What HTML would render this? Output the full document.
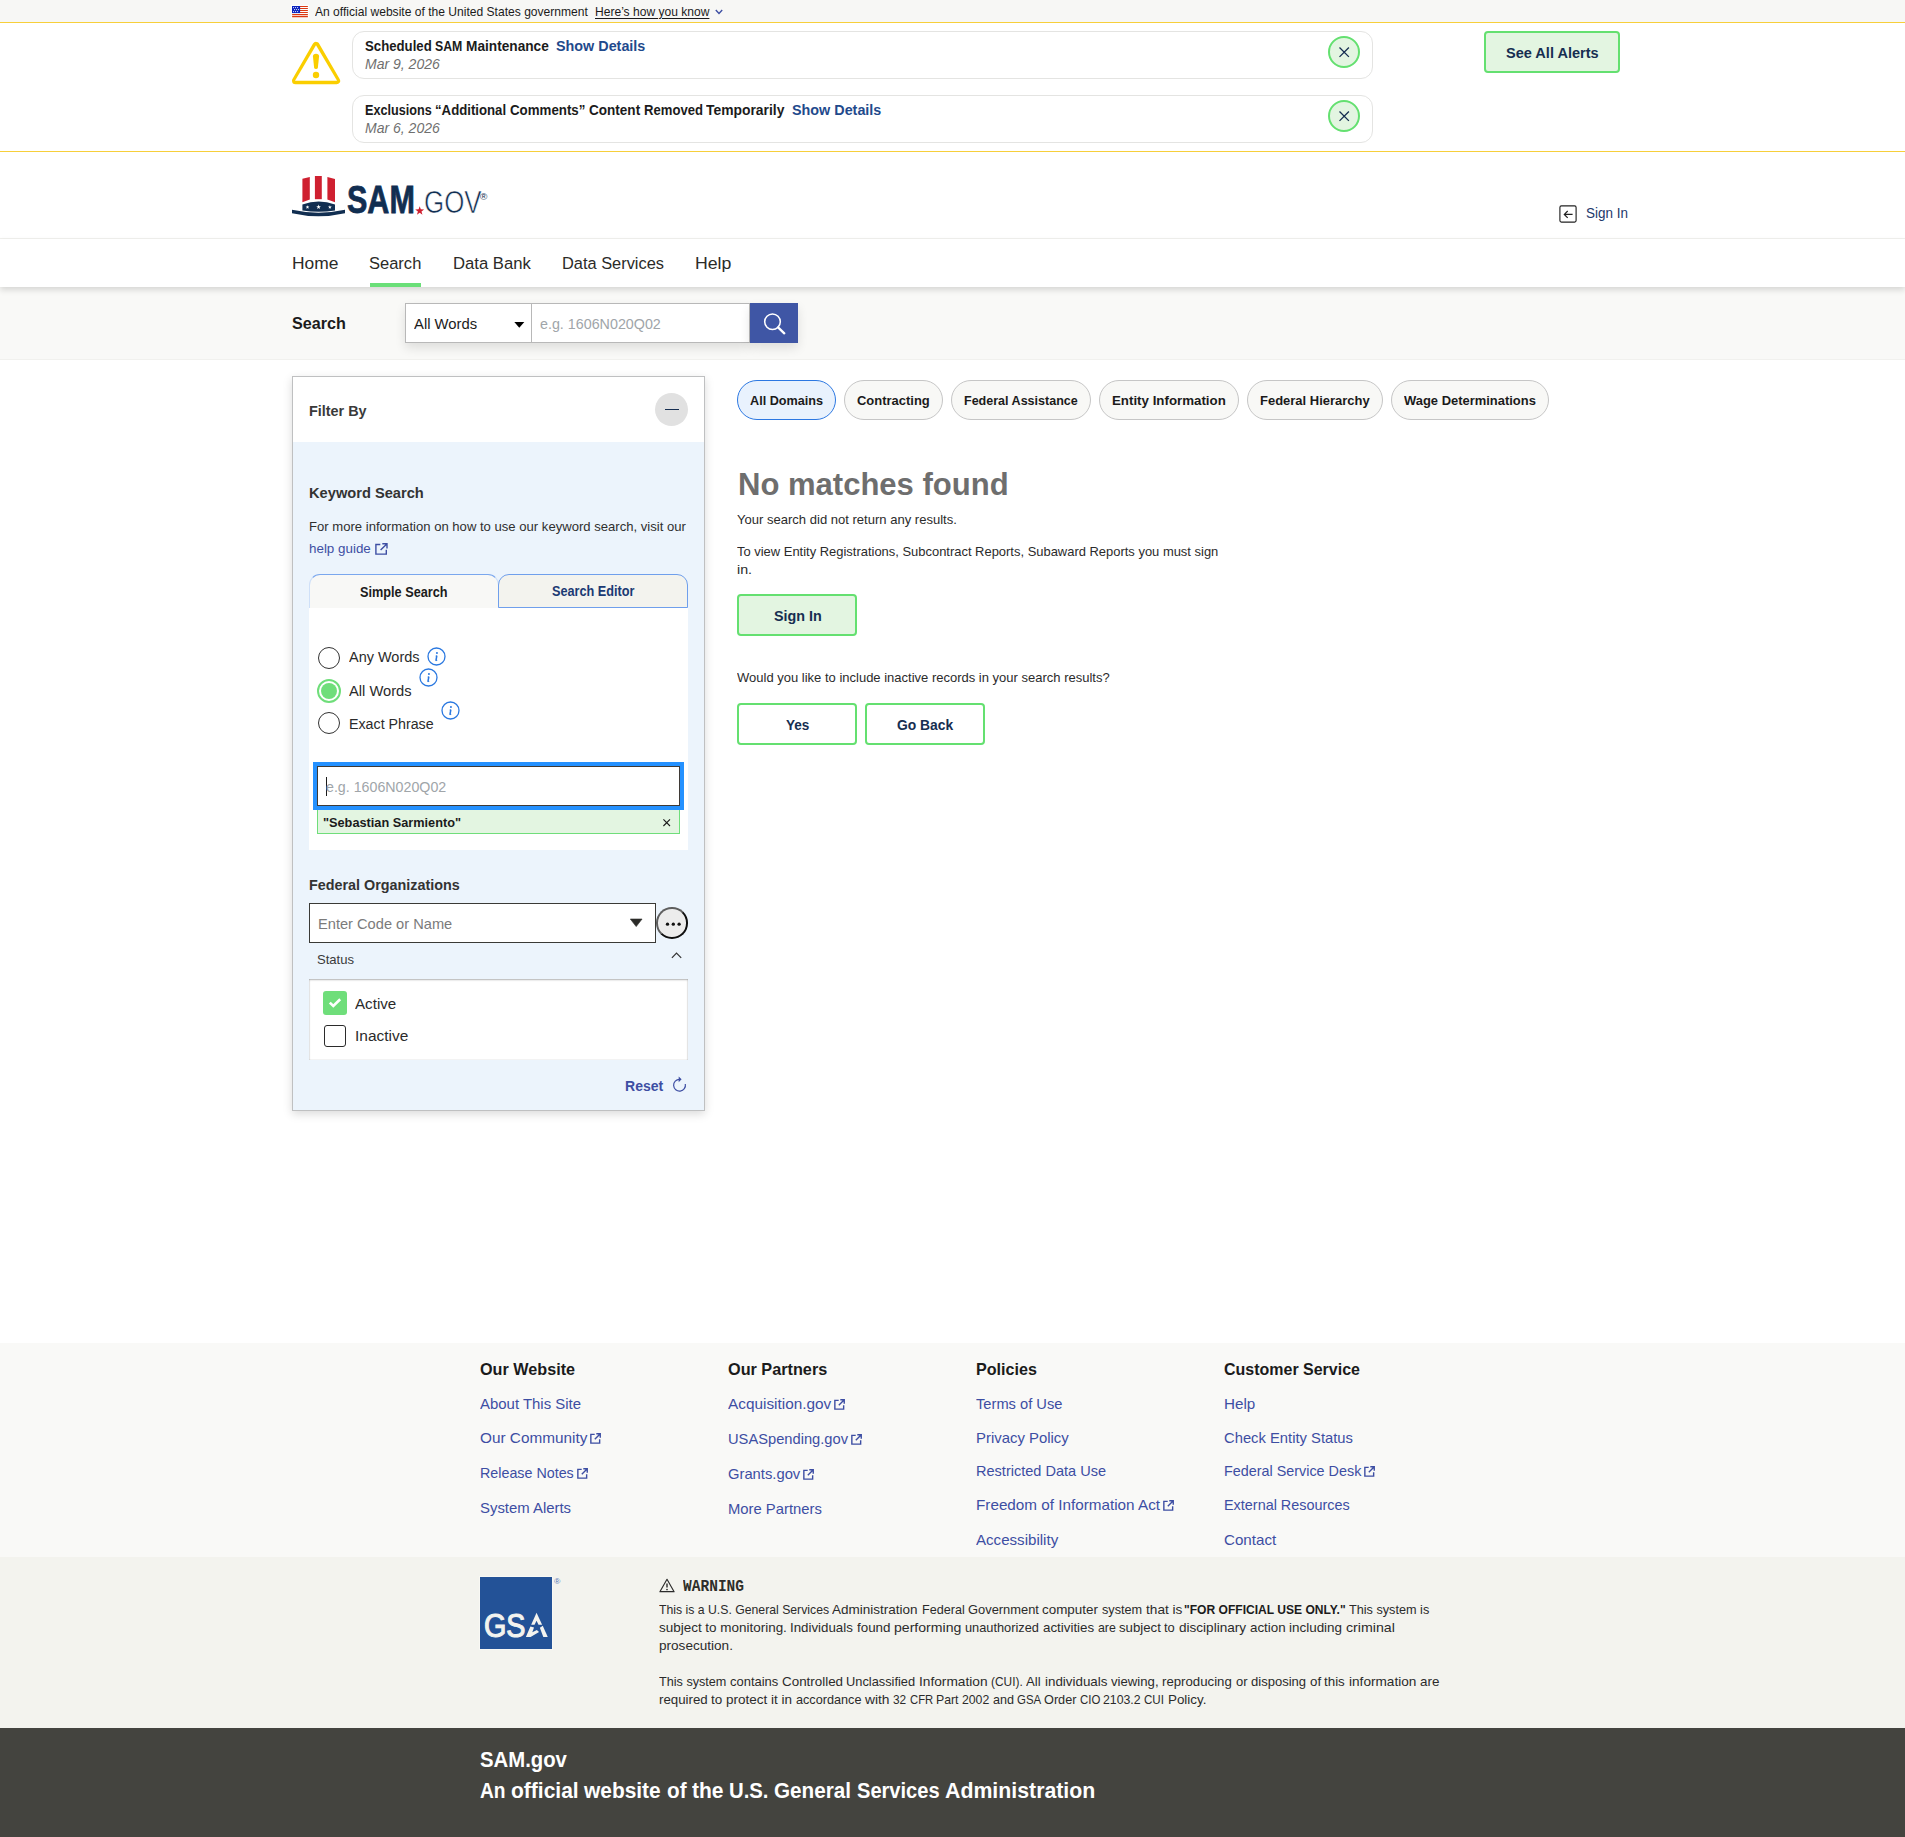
<!DOCTYPE html>
<html lang="en"><head><meta charset="utf-8"><title>SAM.gov | Search</title>
<style>
html,body{margin:0;padding:0;}
body{width:1905px;height:1837px;position:relative;overflow:hidden;background:#fff;
font-family:"Liberation Sans",sans-serif;}
.b{position:absolute;box-sizing:border-box;}
.t{position:absolute;white-space:pre;transform-origin:0 50%;}
svg{position:absolute;overflow:visible;}
</style></head>
<body>
<header>
<div class="b" style="left:0px;top:0px;width:1905px;height:22px;background:#f7f7f5;"></div>
<svg style="left:291px;top:5px" width="18" height="13" viewBox="-1 -1 18 13">
<rect x="-1" y="-1" width="18" height="13.2" fill="#fdfefd"/>
<g fill="#dc3912"><rect x="0" y="0.0" width="16" height="1.1" rx="0.5"/><rect x="0" y="2.0" width="16" height="1.1" rx="0.5"/><rect x="0" y="4.0" width="16" height="1.1" rx="0.5"/><rect x="0" y="6.0" width="16" height="1.1" rx="0.5"/><rect x="0" y="8.05" width="16" height="1.1" rx="0.5"/><rect x="0" y="10.05" width="16" height="1.1" rx="0.5"/></g>
<rect width="8.1" height="7.1" fill="#0a22be"/><g fill="#fff"><circle cx="1.6" cy="1.6" r="0.55"/><circle cx="3.6" cy="1.6" r="0.55"/><circle cx="5.6" cy="1.6" r="0.55"/><circle cx="2.6" cy="3.6" r="0.55"/><circle cx="4.6" cy="3.6" r="0.55"/><circle cx="6.6" cy="3.6" r="0.55"/><circle cx="1.6" cy="5.6" r="0.55"/><circle cx="3.6" cy="5.6" r="0.55"/><circle cx="5.6" cy="5.6" r="0.55"/></g></svg>
<span class="t" style="left:315.30px;top:5.55px;font-size:12.7px;line-height:12.7px;color:#1b1b1b;transform:scaleX(0.9515);">An official website of the United States government</span>
<span class="t" style="left:595.30px;top:5.55px;font-size:12.7px;line-height:12.7px;color:#1b1b1b;transform:scaleX(0.9505);text-decoration:underline;text-underline-offset:2px;">Here’s how you know</span>
<svg style="left:715px;top:9px" width="8" height="6" viewBox="0 0 8 6"><path d="M0.8 1 L4 4.4 L7.2 1" fill="none" stroke="#3d4ea3" stroke-width="1.4"/></svg>
<div class="b" style="left:0px;top:22px;width:1905px;height:1px;background:#f7cf3a;"></div>
<div class="b" style="left:0px;top:151px;width:1905px;height:1px;background:#f7cf3a;"></div>
<svg style="left:286px;top:36px" width="60" height="54" viewBox="286 36 60 54">
<path d="M316.05 45.3 L336.6 80.7 L295.5 80.7 Z" fill="#face00" stroke="#face00" stroke-width="7" stroke-linejoin="round"/>
<path d="M316.0 45.2 L337.1 80.7 L295.0 80.7 Z" fill="#fff"/>
<path d="M312.95 56.6 Q312.95 53.8 316 53.8 Q319.05 53.8 319.05 56.6 L317.9 67.4 Q317.7 69.1 316 69.1 Q314.3 69.1 314.1 67.4 Z" fill="#face00"/>
<circle cx="316" cy="74.95" r="3.2" fill="#face00"/></svg>
<div class="b" style="left:352px;top:31px;width:1021px;height:48px;background:#fff;border:1px solid #e4e4e2;border-radius:12px;"></div>
<span class="t" style="left:364.69px;top:39.37px;font-size:14.8px;line-height:14.8px;color:#1b1b1b;font-weight:700;transform:scaleX(0.8918);">Scheduled </span>
<span class="t" style="left:435.09px;top:39.37px;font-size:14.8px;line-height:14.8px;color:#1b1b1b;font-weight:700;transform:scaleX(0.8324);">SAM </span>
<span class="t" style="left:465.89px;top:39.37px;font-size:14.8px;line-height:14.8px;color:#1b1b1b;font-weight:700;transform:scaleX(0.9240);">Maintenance</span>
<span class="t" style="left:555.79px;top:39.37px;font-size:14.8px;line-height:14.8px;color:#1f4a8c;font-weight:700;transform:scaleX(0.9700);">Show Details</span>
<span class="t" style="left:364.70px;top:56.74px;font-size:14.6px;line-height:14.6px;color:#6f6f6f;font-style:italic;transform:scaleX(0.9604);">Mar 9, 2026</span>
<div class="b" style="left:1328px;top:36px;width:32px;height:32px;background:#e3f5e1;border:2px solid #64e070;border-radius:50%;"></div>
<svg style="left:1339.0px;top:46.8px" width="10.4" height="10.4" viewBox="0 0 10.4 10.4"><path d="M0.5 0.5 L9.9 9.9 M9.9 0.5 L0.5 9.9" stroke="#162e51" stroke-width="1.3" fill="none"/></svg>
<div class="b" style="left:352px;top:95px;width:1021px;height:48px;background:#fff;border:1px solid #e4e4e2;border-radius:12px;"></div>
<span class="t" style="left:364.69px;top:103.37px;font-size:14.8px;line-height:14.8px;color:#1b1b1b;font-weight:700;transform:scaleX(0.8535);">Exclusions </span>
<span class="t" style="left:434.89px;top:103.37px;font-size:14.8px;line-height:14.8px;color:#1b1b1b;font-weight:700;transform:scaleX(0.8921);">“Additional </span>
<span class="t" style="left:509.69px;top:103.37px;font-size:14.8px;line-height:14.8px;color:#1b1b1b;font-weight:700;transform:scaleX(0.8990);">Comments” </span>
<span class="t" style="left:588.79px;top:103.37px;font-size:14.8px;line-height:14.8px;color:#1b1b1b;font-weight:700;transform:scaleX(0.9150);">Content </span>
<span class="t" style="left:643.69px;top:103.37px;font-size:14.8px;line-height:14.8px;color:#1b1b1b;font-weight:700;transform:scaleX(0.8852);">Removed </span>
<span class="t" style="left:706.29px;top:103.37px;font-size:14.8px;line-height:14.8px;color:#1b1b1b;font-weight:700;transform:scaleX(0.9380);">Temporarily</span>
<span class="t" style="left:791.99px;top:103.37px;font-size:14.8px;line-height:14.8px;color:#1f4a8c;font-weight:700;transform:scaleX(0.9700);">Show Details</span>
<span class="t" style="left:364.70px;top:120.74px;font-size:14.6px;line-height:14.6px;color:#6f6f6f;font-style:italic;transform:scaleX(0.9604);">Mar 6, 2026</span>
<div class="b" style="left:1328px;top:100px;width:32px;height:32px;background:#e3f5e1;border:2px solid #64e070;border-radius:50%;"></div>
<svg style="left:1339.0px;top:110.8px" width="10.4" height="10.4" viewBox="0 0 10.4 10.4"><path d="M0.5 0.5 L9.9 9.9 M9.9 0.5 L0.5 9.9" stroke="#162e51" stroke-width="1.3" fill="none"/></svg>
<div class="b" style="left:1484px;top:31px;width:136px;height:42px;background:#e3f5e1;border:2px solid #64e070;border-radius:4px;"></div>
<span class="t" style="left:1505.98px;top:46.49px;font-size:14.9px;line-height:14.9px;color:#162e51;font-weight:700;transform:scaleX(0.9761);">See All Alerts</span>
<svg style="left:0;top:0" width="1905" height="240" viewBox="0 0 1905 240">
<g fill="#cf2030">
<path d="M302.4 178.7 L309.8 177 L309.8 199.6 L302.4 202.2 Z"/>
<path d="M314.9 176 L321.8 176 L321.8 199.2 L314.9 199.2 Z"/>
<path d="M327.4 177 L335 178.9 L335 202.2 L327.4 199.6 Z"/>
</g>
<path d="M302.4 210.6 L302.4 204.4 Q318.7 198.6 335 204.4 L335 210.6 Q318.7 213 302.4 210.6 Z" fill="#112e51"/>
<path d="M292 209.8 Q318.5 215.6 345 209.8 L345 213.2 Q318.5 219.2 292 213.2 Z" fill="#112e51"/>
<g fill="#fff">
<path d="M0 -2 L0.47 -0.65 L1.9 -0.62 L0.76 0.25 L1.18 1.62 L0 0.8 L-1.18 1.62 L-0.76 0.25 L-1.9 -0.62 L-0.47 -0.65 Z" transform="translate(307.5 207.2)"/>
<path d="M0 -2 L0.47 -0.65 L1.9 -0.62 L0.76 0.25 L1.18 1.62 L0 0.8 L-1.18 1.62 L-0.76 0.25 L-1.9 -0.62 L-0.47 -0.65 Z" transform="translate(318.6 207.0) scale(1.25)"/>
<path d="M0 -2 L0.47 -0.65 L1.9 -0.62 L0.76 0.25 L1.18 1.62 L0 0.8 L-1.18 1.62 L-0.76 0.25 L-1.9 -0.62 L-0.47 -0.65 Z" transform="translate(329.9 207.2)"/>
</g>
<path d="M0 -2 L0.47 -0.65 L1.9 -0.62 L0.76 0.25 L1.18 1.62 L0 0.8 L-1.18 1.62 L-0.76 0.25 L-1.9 -0.62 L-0.47 -0.65 Z" transform="translate(419.7 210.9) scale(2.35)" fill="#cf2030"/>
</svg>
<span class="t" style="left:346.78px;top:181.01px;font-size:38.5px;line-height:38.5px;color:#112e51;font-weight:700;transform:scaleX(0.7928);-webkit-text-stroke:0.8px #112e51;">SAM</span>
<span class="t" style="left:424.30px;top:188.04px;font-size:30.9px;line-height:30.9px;color:#112e51;transform:scaleX(0.8388);-webkit-text-stroke:0.65px #fff;">GOV</span>
<span class="t" style="left:480.13px;top:192.90px;font-size:8.5px;line-height:8.5px;color:#112e51;transform:scaleX(1.1707);">®</span>
<svg style="left:1559.1px;top:205.1px" width="18" height="18" viewBox="0 0 18 18">
<rect x="0.9" y="0.9" width="16.2" height="16.2" rx="1.5" fill="none" stroke="#222" stroke-width="1.15"/>
<path d="M13.6 9.4 H5.4 M8.7 6 L5.3 9.4 L8.7 12.8" fill="none" stroke="#222" stroke-width="1.2"/></svg>
<span class="t" style="left:1585.51px;top:206.30px;font-size:14.3px;line-height:14.3px;color:#22386b;transform:scaleX(0.9406);">Sign In</span>
<div class="b" style="left:0px;top:238px;width:1905px;height:1px;background:#f1f1ee;"></div>
<div class="b" style="left:0px;top:287px;width:1905px;height:73px;background:#f9f9f7;border-bottom:1px solid #f1f1ee;"></div>
<div class="b" style="left:0px;top:239px;width:1905px;height:48px;background:#fff;box-shadow:0 3px 6px rgba(0,0,0,.14);"></div>
<span class="t" style="left:291.54px;top:255.17px;font-size:17.4px;line-height:17.4px;color:#2b2b28;transform:scaleX(1.0005);">Home</span>
<span class="t" style="left:369.04px;top:255.17px;font-size:17.4px;line-height:17.4px;color:#2b2b28;transform:scaleX(0.9493);">Search</span>
<span class="t" style="left:452.94px;top:255.17px;font-size:17.4px;line-height:17.4px;color:#2b2b28;transform:scaleX(0.9593);">Data Bank</span>
<span class="t" style="left:561.94px;top:255.17px;font-size:17.4px;line-height:17.4px;color:#2b2b28;transform:scaleX(0.9424);">Data Services</span>
<span class="t" style="left:694.84px;top:255.17px;font-size:17.4px;line-height:17.4px;color:#2b2b28;transform:scaleX(1.0177);">Help</span>
<div class="b" style="left:370px;top:283px;width:51px;height:4px;background:#6adf78;"></div>
<span class="t" style="left:291.54px;top:315.17px;font-size:17.4px;line-height:17.4px;color:#1b1b1b;font-weight:700;transform:scaleX(0.9293);">Search</span>
<div class="b" style="left:405px;top:303px;width:345px;height:40px;background:#fff;border:1px solid #b8b8b8;box-shadow:0 5px 10px rgba(0,0,0,.11);"></div>
<div class="b" style="left:531px;top:304px;width:1px;height:38px;background:#b8b8b8;"></div>
<span class="t" style="left:413.59px;top:317.37px;font-size:14.8px;line-height:14.8px;color:#1b1b1b;transform:scaleX(1.0013);">All Words</span>
<svg style="left:513.6px;top:321.6px" width="10.6" height="5.8" viewBox="0 0 10.6 5.8"><path d="M0.3 0 H10.3 L5.3 5.8 Z" fill="#000"/></svg>
<span class="t" style="left:539.59px;top:317.37px;font-size:14.8px;line-height:14.8px;color:#a0a5a9;transform:scaleX(0.9661);">e.g. 1606N020Q02</span>
<div class="b" style="left:750px;top:303px;width:48px;height:40px;background:#3f56a5;box-shadow:0 5px 10px rgba(0,0,0,.11);"></div>
<svg style="left:762px;top:311px" width="24" height="24" viewBox="0 0 24 24"><circle cx="10.5" cy="10.7" r="7.8" fill="none" stroke="#fff" stroke-width="1.55"/><path d="M16.1 16.4 L22.3 22.3" stroke="#fff" stroke-width="2.3" stroke-linecap="round"/></svg>
</header>
<aside>
<div class="b" style="left:292px;top:376px;width:413px;height:735px;background:#ecf4fc;border:1px solid #bfc0c1;box-shadow:0 3px 9px rgba(0,0,0,.15);"></div>
<div class="b" style="left:293px;top:377px;width:411px;height:65px;background:#fff;"></div>
<span class="t" style="left:308.69px;top:403.67px;font-size:14.8px;line-height:14.8px;color:#3a3a3a;font-weight:700;transform:scaleX(0.9734);">Filter By</span>
<div class="b" style="left:655px;top:393px;width:33px;height:33px;background:#e1e1e1;border-radius:50%;"></div>
<div class="b" style="left:664.8px;top:408.6px;width:14.2px;height:1.4px;background:#162e51;"></div>
<span class="t" style="left:308.69px;top:486.37px;font-size:14.8px;line-height:14.8px;color:#333;font-weight:700;transform:scaleX(0.9902);">Keyword Search</span>
<span class="t" style="left:308.76px;top:520.07px;font-size:13.5px;line-height:13.5px;color:#2f2f2f;transform:scaleX(0.9697);">For more information on how to use our keyword search, visit our</span>
<span class="t" style="left:308.76px;top:541.67px;font-size:13.5px;line-height:13.5px;color:#3d4ea3;transform:scaleX(0.9915);">help guide</span>
<svg style="left:375px;top:543px" width="13" height="12" viewBox="0 0 13 12"><path d="M5.3 1.5 H0.9 V11.1 H11.3 V6.8" fill="none" stroke="#3d4ea3" stroke-width="1.4"/><path d="M7.3 0.8 H12 V5.4 M11.8 1.0 L5.6 7.1" fill="none" stroke="#3d4ea3" stroke-width="1.4"/></svg>
<div class="b" style="left:309px;top:573.8px;width:189.5px;height:34.5px;background:#f8f8f6;border-radius:11px 11px 0 0;border-top:1px solid #7aa7ee;border-left:1px solid #cfe0f8;border-right:1px solid #cfe0f8;"></div>
<div class="b" style="left:497.8px;top:573.8px;width:190.4px;height:34px;background:#f3f3ee;border:1px solid #6f9fec;border-radius:11px 11px 0 0;"></div>
<span class="t" style="left:360.24px;top:585.53px;font-size:13.9px;line-height:13.9px;color:#1b1b1b;font-weight:700;transform:scaleX(0.9141);">Simple Search</span>
<span class="t" style="left:551.64px;top:584.73px;font-size:13.9px;line-height:13.9px;color:#1b3a73;font-weight:700;transform:scaleX(0.9137);">Search Editor</span>
<div class="b" style="left:309px;top:608px;width:379.2px;height:242px;background:#fff;"></div>
<div class="b" style="left:318px;top:647px;width:22px;height:22px;background:#fff;border:1.6px solid #333;border-radius:50%;"></div>
<span class="t" style="left:348.98px;top:650.49px;font-size:14.9px;line-height:14.9px;color:#2b2b2b;transform:scaleX(0.9721);">Any Words</span>
<svg style="left:426.7px;top:646.7px" width="19" height="19" viewBox="0 0 19 19"><circle cx="9.5" cy="9.5" r="8.5" fill="#fff" stroke="#2a78e0" stroke-width="1.3"/><circle cx="9.95" cy="6.0" r="1.0" fill="#2a78e0"/><path d="M9.8 8.6 L8.95 13.8" stroke="#2a78e0" stroke-width="1.55"/><path d="M8.6 9.0 L9.9 8.7 M8.9 13.7 L10.3 13.4" stroke="#2a78e0" stroke-width="0.8"/></svg>
<div class="b" style="left:317px;top:679px;width:24px;height:24px;background:#fff;border:2px solid #6fde7a;border-radius:50%;"></div>
<div class="b" style="left:321px;top:683px;width:16px;height:16px;background:#6fde7a;border-radius:50%;"></div>
<span class="t" style="left:348.98px;top:684.29px;font-size:14.9px;line-height:14.9px;color:#2b2b2b;transform:scaleX(0.9872);">All Words</span>
<svg style="left:418.8px;top:667.6px" width="19" height="19" viewBox="0 0 19 19"><circle cx="9.5" cy="9.5" r="8.5" fill="#fff" stroke="#2a78e0" stroke-width="1.3"/><circle cx="9.95" cy="6.0" r="1.0" fill="#2a78e0"/><path d="M9.8 8.6 L8.95 13.8" stroke="#2a78e0" stroke-width="1.55"/><path d="M8.6 9.0 L9.9 8.7 M8.9 13.7 L10.3 13.4" stroke="#2a78e0" stroke-width="0.8"/></svg>
<div class="b" style="left:318px;top:712px;width:22px;height:22px;background:#fff;border:1.6px solid #333;border-radius:50%;"></div>
<span class="t" style="left:348.98px;top:716.79px;font-size:14.9px;line-height:14.9px;color:#2b2b2b;transform:scaleX(0.9557);">Exact Phrase</span>
<svg style="left:440.7px;top:700.7px" width="19" height="19" viewBox="0 0 19 19"><circle cx="9.5" cy="9.5" r="8.5" fill="#fff" stroke="#2a78e0" stroke-width="1.3"/><circle cx="9.95" cy="6.0" r="1.0" fill="#2a78e0"/><path d="M9.8 8.6 L8.95 13.8" stroke="#2a78e0" stroke-width="1.55"/><path d="M8.6 9.0 L9.9 8.7 M8.9 13.7 L10.3 13.4" stroke="#2a78e0" stroke-width="0.8"/></svg>
<div class="b" style="left:313px;top:762px;width:371px;height:48px;background:#2491ff;"></div>
<div class="b" style="left:317px;top:766px;width:363px;height:40px;background:#fff;border:1px solid #3f3a36;"></div>
<div class="b" style="left:326px;top:776.5px;width:1px;height:19.5px;background:#1b1b1b;"></div>
<span class="t" style="left:325.79px;top:780.37px;font-size:14.8px;line-height:14.8px;color:#a0a5a9;transform:scaleX(0.9613);">e.g. 1606N020Q02</span>
<div class="b" style="left:317px;top:810px;width:363px;height:24px;background:#e3f5e1;border:1px solid #6fde7a;border-top:none;"></div>
<span class="t" style="left:322.75px;top:816.39px;font-size:13.6px;line-height:13.6px;color:#1b1b1b;font-weight:700;transform:scaleX(0.9364);">"Sebastian Sarmiento"</span>
<svg style="left:663.2px;top:819.4px" width="7.4" height="7.4" viewBox="0 0 7.4 7.4"><path d="M0.4 0.4 L7 7 M7 0.4 L0.4 7" stroke="#1b1b1b" stroke-width="1.1"/></svg>
<span class="t" style="left:308.69px;top:877.67px;font-size:14.8px;line-height:14.8px;color:#333;font-weight:700;transform:scaleX(0.9705);">Federal Organizations</span>
<div class="b" style="left:309px;top:903px;width:347px;height:40px;background:#fff;border:1px solid #3a3a36;"></div>
<span class="t" style="left:317.98px;top:916.10px;font-size:15px;line-height:15px;color:#7b7b7b;transform:scaleX(0.9758);">Enter Code or Name</span>
<svg style="left:630px;top:919.2px" width="12.4" height="7.8" viewBox="0 0 12.4 7.8"><path d="M0.3 0 H12.1 L6.2 7.6 Z" fill="#2b2b28" stroke="#2b2b28" stroke-width="0.6" stroke-linejoin="round"/></svg>
<div class="b" style="left:656.4px;top:907px;width:31.7px;height:31.7px;background:#ececec;border-radius:50%;border:2px solid #0e0e0e;border-top-color:#5e5e5e;border-left-color:#5e5e5e;"></div>
<svg style="left:660px;top:918px" width="24" height="12" viewBox="660 918 24 12"><g fill="#111"><circle cx="667.5" cy="924.2" r="1.65"/><circle cx="673.3" cy="924.2" r="1.65"/><circle cx="679.1" cy="924.2" r="1.65"/></g></svg>
<span class="t" style="left:316.66px;top:952.96px;font-size:13.4px;line-height:13.4px;color:#3a3a3a;transform:scaleX(0.9764);">Status</span>
<svg style="left:670px;top:950px" width="13" height="10" viewBox="670 950 13 10"><path d="M671.9 957.9 L676.5 953.0 L681.2 957.9" fill="none" stroke="#333" stroke-width="1.2"/></svg>
<div class="b" style="left:309px;top:979px;width:379px;height:81px;background:#fff;box-shadow:inset 0 1px 2px rgba(0,0,0,.28),inset 0 0 1px rgba(0,0,0,.35);"></div>
<div class="b" style="left:323px;top:991px;width:24px;height:24px;background:#6fde7a;border-radius:3px;"></div>
<svg style="left:328px;top:997px" width="14" height="12" viewBox="0 0 14 12"><path d="M1.8 5.6 L5.3 9 L12.2 2.2" fill="none" stroke="#fff" stroke-width="2.6"/></svg>
<span class="t" style="left:355.36px;top:996.23px;font-size:15.2px;line-height:15.2px;color:#2b2b2b;transform:scaleX(0.9979);">Active</span>
<div class="b" style="left:324px;top:1025px;width:22px;height:22px;background:#fff;border:1.6px solid #2b2b2b;border-radius:3px;"></div>
<span class="t" style="left:355.36px;top:1027.63px;font-size:15.2px;line-height:15.2px;color:#2b2b2b;transform:scaleX(1.0177);">Inactive</span>
<span class="t" style="left:624.50px;top:1078.73px;font-size:14.5px;line-height:14.5px;color:#3d4ea3;font-weight:700;transform:scaleX(0.9670);">Reset</span>
<svg style="left:671.8px;top:1075.9px" width="15" height="16" viewBox="0 0 15 16"><path d="M7.6 3.3 A5.9 5.9 0 1 0 13.3 8" fill="none" stroke="#3d4ea3" stroke-width="1.2"/><path d="M6.7 0.4 L9.6 3.3 L6.7 6.2 Z" fill="#3d4ea3"/></svg>
</aside>
<main>
<div class="b" style="left:737.2px;top:380px;width:98.79999999999995px;height:40px;background:#e9f2fd;border:1px solid #2c78e2;border-radius:20px;"></div>
<span class="t" style="left:749.96px;top:393.56px;font-size:13.4px;line-height:13.4px;color:#1b1b1b;font-weight:700;transform:scaleX(0.9442);">All Domains</span>
<div class="b" style="left:844.1px;top:380px;width:98.5px;height:40px;background:#f8f8f6;border:1px solid #c6c6c6;border-radius:20px;"></div>
<span class="t" style="left:856.86px;top:393.56px;font-size:13.4px;line-height:13.4px;color:#1b1b1b;font-weight:700;transform:scaleX(0.9685);">Contracting</span>
<div class="b" style="left:951.1px;top:380px;width:139.4999999999999px;height:40px;background:#f8f8f6;border:1px solid #c6c6c6;border-radius:20px;"></div>
<span class="t" style="left:963.86px;top:393.56px;font-size:13.4px;line-height:13.4px;color:#1b1b1b;font-weight:700;transform:scaleX(0.9358);">Federal Assistance</span>
<div class="b" style="left:1099.2px;top:380px;width:139.5px;height:40px;background:#f8f8f6;border:1px solid #c6c6c6;border-radius:20px;"></div>
<span class="t" style="left:1111.96px;top:393.56px;font-size:13.4px;line-height:13.4px;color:#1b1b1b;font-weight:700;transform:scaleX(0.9931);">Entity Information</span>
<div class="b" style="left:1247.3px;top:380px;width:135.4000000000001px;height:40px;background:#f8f8f6;border:1px solid #c6c6c6;border-radius:20px;"></div>
<span class="t" style="left:1260.06px;top:393.56px;font-size:13.4px;line-height:13.4px;color:#1b1b1b;font-weight:700;transform:scaleX(0.9694);">Federal Hierarchy</span>
<div class="b" style="left:1391.3px;top:380px;width:157.60000000000014px;height:40px;background:#f8f8f6;border:1px solid #c6c6c6;border-radius:20px;"></div>
<span class="t" style="left:1404.06px;top:393.56px;font-size:13.4px;line-height:13.4px;color:#1b1b1b;font-weight:700;transform:scaleX(0.9667);">Wage Determinations</span>
<span class="t" style="left:737.88px;top:469.09px;font-size:31.2px;line-height:31.2px;color:#6e6e6e;font-weight:700;transform:scaleX(0.9948);">No matches found</span>
<span class="t" style="left:736.66px;top:513.16px;font-size:13.4px;line-height:13.4px;color:#2b2b2b;transform:scaleX(0.9738);">Your search did not return any results.</span>
<span class="t" style="left:736.66px;top:544.66px;font-size:13.4px;line-height:13.4px;color:#2b2b2b;transform:scaleX(0.9666);">To view Entity Registrations, Subcontract Reports, Subaward Reports you must sign</span>
<span class="t" style="left:736.66px;top:563.16px;font-size:13.4px;line-height:13.4px;color:#2b2b2b;transform:scaleX(1.0648);">in.</span>
<div class="b" style="left:737px;top:594px;width:120px;height:42px;background:#e3f5e1;border:2px solid #64e070;border-radius:4px;"></div>
<span class="t" style="left:773.50px;top:608.94px;font-size:14.6px;line-height:14.6px;color:#162e51;font-weight:700;transform:scaleX(0.9825);">Sign In</span>
<span class="t" style="left:736.66px;top:670.86px;font-size:13.4px;line-height:13.4px;color:#2b2b2b;transform:scaleX(0.9710);">Would you like to include inactive records in your search results?</span>
<div class="b" style="left:737px;top:703px;width:120px;height:42px;background:#fff;border:2px solid #64e070;border-radius:4px;"></div>
<span class="t" style="left:785.80px;top:717.74px;font-size:14.6px;line-height:14.6px;color:#162e51;font-weight:700;transform:scaleX(0.9298);">Yes</span>
<div class="b" style="left:865px;top:703px;width:120px;height:42px;background:#fff;border:2px solid #64e070;border-radius:4px;"></div>
<span class="t" style="left:897.40px;top:717.74px;font-size:14.6px;line-height:14.6px;color:#162e51;font-weight:700;transform:scaleX(0.9491);">Go Back</span>
</main>
<footer>
<div class="b" style="left:0px;top:1343px;width:1905px;height:214px;background:#f9f9f7;"></div>
<span class="t" style="left:480.08px;top:1361.86px;font-size:16.7px;line-height:16.7px;color:#1b1b1b;font-weight:700;transform:scaleX(0.9699);">Our Website</span>
<span class="t" style="left:728.28px;top:1361.86px;font-size:16.7px;line-height:16.7px;color:#1b1b1b;font-weight:700;transform:scaleX(0.9728);">Our Partners</span>
<span class="t" style="left:976.08px;top:1361.86px;font-size:16.7px;line-height:16.7px;color:#1b1b1b;font-weight:700;transform:scaleX(0.9645);">Policies</span>
<span class="t" style="left:1224.38px;top:1361.86px;font-size:16.7px;line-height:16.7px;color:#1b1b1b;font-weight:700;transform:scaleX(0.9578);">Customer Service</span>
<span class="t" style="left:480.19px;top:1397.07px;font-size:14.8px;line-height:14.8px;color:#3d4ea3;transform:scaleX(1.0095);">About This Site</span>
<span class="t" style="left:480.19px;top:1431.27px;font-size:14.8px;line-height:14.8px;color:#3d4ea3;transform:scaleX(1.0359);">Our Community</span>
<svg style="left:590.1px;top:1433.3000000000002px" width="11" height="11" viewBox="0 0 11 11"><path d="M4.7 1.35 H0.85 V10.15 H9.65 V6.3" fill="none" stroke="#3d4ea3" stroke-width="1.4"/><path d="M6.3 0.75 H10.25 V4.7 M10.0 1.0 L4.8 6.2" fill="none" stroke="#3d4ea3" stroke-width="1.4"/></svg>
<span class="t" style="left:480.19px;top:1465.87px;font-size:14.8px;line-height:14.8px;color:#3d4ea3;transform:scaleX(0.9656);">Release Notes</span>
<svg style="left:576.5px;top:1467.9px" width="11" height="11" viewBox="0 0 11 11"><path d="M4.7 1.35 H0.85 V10.15 H9.65 V6.3" fill="none" stroke="#3d4ea3" stroke-width="1.4"/><path d="M6.3 0.75 H10.25 V4.7 M10.0 1.0 L4.8 6.2" fill="none" stroke="#3d4ea3" stroke-width="1.4"/></svg>
<span class="t" style="left:480.19px;top:1501.07px;font-size:14.8px;line-height:14.8px;color:#3d4ea3;transform:scaleX(1.0064);">System Alerts</span>
<span class="t" style="left:728.39px;top:1397.07px;font-size:14.8px;line-height:14.8px;color:#3d4ea3;transform:scaleX(1.0371);">Acquisition.gov</span>
<svg style="left:834.2px;top:1399.1000000000001px" width="11" height="11" viewBox="0 0 11 11"><path d="M4.7 1.35 H0.85 V10.15 H9.65 V6.3" fill="none" stroke="#3d4ea3" stroke-width="1.4"/><path d="M6.3 0.75 H10.25 V4.7 M10.0 1.0 L4.8 6.2" fill="none" stroke="#3d4ea3" stroke-width="1.4"/></svg>
<span class="t" style="left:728.39px;top:1432.27px;font-size:14.8px;line-height:14.8px;color:#3d4ea3;transform:scaleX(0.9925);">USASpending.gov</span>
<svg style="left:851.0000000000001px;top:1434.3000000000002px" width="11" height="11" viewBox="0 0 11 11"><path d="M4.7 1.35 H0.85 V10.15 H9.65 V6.3" fill="none" stroke="#3d4ea3" stroke-width="1.4"/><path d="M6.3 0.75 H10.25 V4.7 M10.0 1.0 L4.8 6.2" fill="none" stroke="#3d4ea3" stroke-width="1.4"/></svg>
<span class="t" style="left:728.39px;top:1466.97px;font-size:14.8px;line-height:14.8px;color:#3d4ea3;transform:scaleX(0.9980);">Grants.gov</span>
<svg style="left:803.2px;top:1469.0px" width="11" height="11" viewBox="0 0 11 11"><path d="M4.7 1.35 H0.85 V10.15 H9.65 V6.3" fill="none" stroke="#3d4ea3" stroke-width="1.4"/><path d="M6.3 0.75 H10.25 V4.7 M10.0 1.0 L4.8 6.2" fill="none" stroke="#3d4ea3" stroke-width="1.4"/></svg>
<span class="t" style="left:728.39px;top:1502.07px;font-size:14.8px;line-height:14.8px;color:#3d4ea3;transform:scaleX(1.0008);">More Partners</span>
<span class="t" style="left:976.19px;top:1397.07px;font-size:14.8px;line-height:14.8px;color:#3d4ea3;transform:scaleX(0.9916);">Terms of Use</span>
<span class="t" style="left:976.19px;top:1431.27px;font-size:14.8px;line-height:14.8px;color:#3d4ea3;transform:scaleX(1.0069);">Privacy Policy</span>
<span class="t" style="left:976.19px;top:1464.27px;font-size:14.8px;line-height:14.8px;color:#3d4ea3;transform:scaleX(0.9820);">Restricted Data Use</span>
<span class="t" style="left:976.19px;top:1498.37px;font-size:14.8px;line-height:14.8px;color:#3d4ea3;transform:scaleX(1.0311);">Freedom of Information Act</span>
<svg style="left:1162.8px;top:1500.4px" width="11" height="11" viewBox="0 0 11 11"><path d="M4.7 1.35 H0.85 V10.15 H9.65 V6.3" fill="none" stroke="#3d4ea3" stroke-width="1.4"/><path d="M6.3 0.75 H10.25 V4.7 M10.0 1.0 L4.8 6.2" fill="none" stroke="#3d4ea3" stroke-width="1.4"/></svg>
<span class="t" style="left:976.19px;top:1532.57px;font-size:14.8px;line-height:14.8px;color:#3d4ea3;transform:scaleX(1.0203);">Accessibility</span>
<span class="t" style="left:1224.49px;top:1397.07px;font-size:14.8px;line-height:14.8px;color:#3d4ea3;transform:scaleX(1.0260);">Help</span>
<span class="t" style="left:1224.49px;top:1431.27px;font-size:14.8px;line-height:14.8px;color:#3d4ea3;transform:scaleX(0.9985);">Check Entity Status</span>
<span class="t" style="left:1224.49px;top:1464.27px;font-size:14.8px;line-height:14.8px;color:#3d4ea3;transform:scaleX(0.9708);">Federal Service Desk</span>
<svg style="left:1364.3999999999999px;top:1466.3000000000002px" width="11" height="11" viewBox="0 0 11 11"><path d="M4.7 1.35 H0.85 V10.15 H9.65 V6.3" fill="none" stroke="#3d4ea3" stroke-width="1.4"/><path d="M6.3 0.75 H10.25 V4.7 M10.0 1.0 L4.8 6.2" fill="none" stroke="#3d4ea3" stroke-width="1.4"/></svg>
<span class="t" style="left:1224.49px;top:1498.37px;font-size:14.8px;line-height:14.8px;color:#3d4ea3;transform:scaleX(0.9737);">External Resources</span>
<span class="t" style="left:1224.49px;top:1532.57px;font-size:14.8px;line-height:14.8px;color:#3d4ea3;transform:scaleX(1.0241);">Contact</span>
<div class="b" style="left:0px;top:1557px;width:1905px;height:171px;background:#f3f3ee;"></div>
<div class="b" style="left:479px;top:1576px;width:74px;height:74px;background:#f8f8f4;"></div>
<div class="b" style="left:480px;top:1577px;width:72px;height:72px;background:#235297;"></div>
<span class="t" style="left:483.62px;top:1610.07px;font-size:32.4px;line-height:32.4px;color:#f3f3ef;transform:scaleX(0.8879);-webkit-text-stroke:1.1px #f3f3ef;">GS</span>
<svg style="left:474px;top:1572px" width="92" height="82" viewBox="0 0 1905 1698">
<g fill="#f3f3ef">
<path d="M1295 842 L1411 1092 L1336 1092 L1295 1008 L1254 1092 L1184 1092 Z"/>
<path d="M1168 1128 L1243 1150 L1207 1247 L1302 1203 L1347 1240 L1172 1346 L1074 1346 Z"/>
<path d="M1364 1152 L1424 1112 L1527 1346 L1436 1346 Z"/>
</g></svg>
<span class="t" style="left:554.01px;top:1577.87px;font-size:7px;line-height:7px;color:#5877b3;transform:scaleX(1.2317);">®</span>
<svg style="left:659.1px;top:1577.7px" width="16" height="14.6" viewBox="0 0 16 14.6"><path d="M8 1.3 L15.1 13.7 H0.9 Z" fill="none" stroke="#2b2b2b" stroke-width="1.15" stroke-linejoin="round"/><path d="M8 5.6 V9.6" stroke="#2b2b2b" stroke-width="1.4"/><circle cx="8" cy="11.5" r="0.85" fill="#2b2b2b"/></svg>
<span class="t" style="left:682.73px;top:1579.71px;font-size:15.9px;line-height:15.9px;color:#2e2e2a;font-family:'Liberation Mono',monospace;font-weight:700;transform:scaleX(0.9144);">WARNING</span>
<span class="t" style="left:658.79px;top:1603.78px;font-size:12.9px;line-height:12.9px;color:#2b2b2b;transform:scaleX(0.9497);">This is a U.S. General Services </span>
<span class="t" style="left:832.29px;top:1603.78px;font-size:12.9px;line-height:12.9px;color:#2b2b2b;transform:scaleX(1.0473);">Administration </span>
<span class="t" style="left:921.59px;top:1603.78px;font-size:12.9px;line-height:12.9px;color:#2b2b2b;transform:scaleX(0.9768);">Federal </span>
<span class="t" style="left:967.79px;top:1603.78px;font-size:12.9px;line-height:12.9px;color:#2b2b2b;transform:scaleX(0.9998);">Government </span>
<span class="t" style="left:1042.29px;top:1603.78px;font-size:12.9px;line-height:12.9px;color:#2b2b2b;transform:scaleX(1.0414);">computer </span>
<span class="t" style="left:1101.99px;top:1603.78px;font-size:12.9px;line-height:12.9px;color:#2b2b2b;transform:scaleX(0.9841);">system </span>
<span class="t" style="left:1145.69px;top:1603.78px;font-size:12.9px;line-height:12.9px;color:#2b2b2b;transform:scaleX(1.0585);">that is</span>
<span class="t" style="left:1184.39px;top:1603.78px;font-size:12.9px;line-height:12.9px;color:#1b1b1b;font-weight:700;transform:scaleX(0.9361);">"FOR OFFICIAL USE ONLY."</span>
<span class="t" style="left:1349.29px;top:1603.78px;font-size:12.9px;line-height:12.9px;color:#2b2b2b;transform:scaleX(0.9824);">This system is</span>
<span class="t" style="left:658.79px;top:1621.68px;font-size:12.9px;line-height:12.9px;color:#2b2b2b;transform:scaleX(1.0435);">subject to monitoring. </span>
<span class="t" style="left:790.39px;top:1621.68px;font-size:12.9px;line-height:12.9px;color:#2b2b2b;transform:scaleX(1.0310);">Individuals </span>
<span class="t" style="left:856.89px;top:1621.68px;font-size:12.9px;line-height:12.9px;color:#2b2b2b;transform:scaleX(1.0378);">found </span>
<span class="t" style="left:894.09px;top:1621.68px;font-size:12.9px;line-height:12.9px;color:#2b2b2b;transform:scaleX(1.0920);">performing </span>
<span class="t" style="left:965.29px;top:1621.68px;font-size:12.9px;line-height:12.9px;color:#2b2b2b;transform:scaleX(0.9920);">unauthorized </span>
<span class="t" style="left:1042.79px;top:1621.68px;font-size:12.9px;line-height:12.9px;color:#2b2b2b;transform:scaleX(1.0355);">activities </span>
<span class="t" style="left:1097.69px;top:1621.68px;font-size:12.9px;line-height:12.9px;color:#2b2b2b;transform:scaleX(0.9586);">are </span>
<span class="t" style="left:1118.99px;top:1621.68px;font-size:12.9px;line-height:12.9px;color:#2b2b2b;transform:scaleX(1.0239);">subject </span>
<span class="t" style="left:1164.49px;top:1621.68px;font-size:12.9px;line-height:12.9px;color:#2b2b2b;transform:scaleX(1.0039);">to </span>
<span class="t" style="left:1178.89px;top:1621.68px;font-size:12.9px;line-height:12.9px;color:#2b2b2b;transform:scaleX(1.0513);">disciplinary </span>
<span class="t" style="left:1249.69px;top:1621.68px;font-size:12.9px;line-height:12.9px;color:#2b2b2b;transform:scaleX(1.0373);">action </span>
<span class="t" style="left:1289.09px;top:1621.68px;font-size:12.9px;line-height:12.9px;color:#2b2b2b;transform:scaleX(1.0428);">including </span>
<span class="t" style="left:1345.89px;top:1621.68px;font-size:12.9px;line-height:12.9px;color:#2b2b2b;transform:scaleX(1.0994);">criminal</span>
<span class="t" style="left:658.79px;top:1639.58px;font-size:12.9px;line-height:12.9px;color:#2b2b2b;transform:scaleX(1.0525);">prosecution.</span>
<span class="t" style="left:658.79px;top:1675.78px;font-size:12.9px;line-height:12.9px;color:#2b2b2b;transform:scaleX(0.9800);">This system </span>
<span class="t" style="left:729.69px;top:1675.78px;font-size:12.9px;line-height:12.9px;color:#2b2b2b;transform:scaleX(1.0056);">contains </span>
<span class="t" style="left:781.59px;top:1675.78px;font-size:12.9px;line-height:12.9px;color:#2b2b2b;transform:scaleX(1.0394);">Controlled </span>
<span class="t" style="left:846.39px;top:1675.78px;font-size:12.9px;line-height:12.9px;color:#2b2b2b;transform:scaleX(0.9948);">Unclassified </span>
<span class="t" style="left:919.09px;top:1675.78px;font-size:12.9px;line-height:12.9px;color:#2b2b2b;transform:scaleX(1.0635);">Information </span>
<span class="t" style="left:991.49px;top:1675.78px;font-size:12.9px;line-height:12.9px;color:#2b2b2b;transform:scaleX(0.9222);">(CUI). </span>
<span class="t" style="left:1026.49px;top:1675.78px;font-size:12.9px;line-height:12.9px;color:#2b2b2b;transform:scaleX(1.0211);">All </span>
<span class="t" style="left:1044.79px;top:1675.78px;font-size:12.9px;line-height:12.9px;color:#2b2b2b;transform:scaleX(1.0379);">individuals </span>
<span class="t" style="left:1110.99px;top:1675.78px;font-size:12.9px;line-height:12.9px;color:#2b2b2b;transform:scaleX(1.0208);">viewing, </span>
<span class="t" style="left:1162.19px;top:1675.78px;font-size:12.9px;line-height:12.9px;color:#2b2b2b;transform:scaleX(1.0255);">reproducing </span>
<span class="t" style="left:1235.69px;top:1675.78px;font-size:12.9px;line-height:12.9px;color:#2b2b2b;transform:scaleX(1.0102);">or </span>
<span class="t" style="left:1250.89px;top:1675.78px;font-size:12.9px;line-height:12.9px;color:#2b2b2b;transform:scaleX(1.0113);">disposing </span>
<span class="t" style="left:1309.59px;top:1675.78px;font-size:12.9px;line-height:12.9px;color:#2b2b2b;transform:scaleX(1.0318);">of </span>
<span class="t" style="left:1324.39px;top:1675.78px;font-size:12.9px;line-height:12.9px;color:#2b2b2b;transform:scaleX(1.0357);">this </span>
<span class="t" style="left:1348.89px;top:1675.78px;font-size:12.9px;line-height:12.9px;color:#2b2b2b;transform:scaleX(1.0570);">information </span>
<span class="t" style="left:1420.09px;top:1675.78px;font-size:12.9px;line-height:12.9px;color:#2b2b2b;transform:scaleX(1.0418);">are</span>
<span class="t" style="left:658.79px;top:1693.68px;font-size:12.9px;line-height:12.9px;color:#2b2b2b;transform:scaleX(1.0297);">required </span>
<span class="t" style="left:711.19px;top:1693.68px;font-size:12.9px;line-height:12.9px;color:#2b2b2b;transform:scaleX(1.0458);">to </span>
<span class="t" style="left:726.19px;top:1693.68px;font-size:12.9px;line-height:12.9px;color:#2b2b2b;transform:scaleX(1.0459);">protect it in </span>
<span class="t" style="left:795.89px;top:1693.68px;font-size:12.9px;line-height:12.9px;color:#2b2b2b;transform:scaleX(0.9824);">accordance </span>
<span class="t" style="left:864.89px;top:1693.68px;font-size:12.9px;line-height:12.9px;color:#2b2b2b;transform:scaleX(1.0711);">with </span>
<span class="t" style="left:893.29px;top:1693.68px;font-size:12.9px;line-height:12.9px;color:#2b2b2b;transform:scaleX(0.9207);">32 </span>
<span class="t" style="left:909.79px;top:1693.68px;font-size:12.9px;line-height:12.9px;color:#2b2b2b;transform:scaleX(0.8744);">CFR </span>
<span class="t" style="left:936.09px;top:1693.68px;font-size:12.9px;line-height:12.9px;color:#2b2b2b;transform:scaleX(0.9532);">Part 2002 </span>
<span class="t" style="left:992.79px;top:1693.68px;font-size:12.9px;line-height:12.9px;color:#2b2b2b;transform:scaleX(0.9763);">and </span>
<span class="t" style="left:1017.29px;top:1693.68px;font-size:12.9px;line-height:12.9px;color:#2b2b2b;transform:scaleX(0.8872);">GSA </span>
<span class="t" style="left:1043.99px;top:1693.68px;font-size:12.9px;line-height:12.9px;color:#2b2b2b;transform:scaleX(0.9850);">Order </span>
<span class="t" style="left:1079.99px;top:1693.68px;font-size:12.9px;line-height:12.9px;color:#2b2b2b;transform:scaleX(0.8868);">CIO </span>
<span class="t" style="left:1103.49px;top:1693.68px;font-size:12.9px;line-height:12.9px;color:#2b2b2b;transform:scaleX(0.9531);">2103.2 </span>
<span class="t" style="left:1144.49px;top:1693.68px;font-size:12.9px;line-height:12.9px;color:#2b2b2b;transform:scaleX(0.8993);">CUI </span>
<span class="t" style="left:1167.69px;top:1693.68px;font-size:12.9px;line-height:12.9px;color:#2b2b2b;transform:scaleX(1.0379);">Policy.</span>
<div class="b" style="left:0px;top:1728px;width:1905px;height:109px;background:#44443f;"></div>
<span class="t" style="left:479.80px;top:1749.36px;font-size:21.9px;line-height:21.9px;color:#fff;font-weight:700;transform:scaleX(0.9280);">SAM.gov</span>
<span class="t" style="left:479.60px;top:1779.96px;font-size:21.9px;line-height:21.9px;color:#fff;font-weight:700;transform:scaleX(0.8762);">An </span>
<span class="t" style="left:510.50px;top:1779.96px;font-size:21.9px;line-height:21.9px;color:#fff;font-weight:700;transform:scaleX(0.9590);">official </span>
<span class="t" style="left:584.00px;top:1779.96px;font-size:21.9px;line-height:21.9px;color:#fff;font-weight:700;transform:scaleX(0.9550);">website </span>
<span class="t" style="left:666.50px;top:1779.96px;font-size:21.9px;line-height:21.9px;color:#fff;font-weight:700;transform:scaleX(0.9458);">of </span>
<span class="t" style="left:691.80px;top:1779.96px;font-size:21.9px;line-height:21.9px;color:#fff;font-weight:700;transform:scaleX(0.9609);">the </span>
<span class="t" style="left:729.20px;top:1779.96px;font-size:21.9px;line-height:21.9px;color:#fff;font-weight:700;transform:scaleX(0.9269);">U.S. </span>
<span class="t" style="left:774.30px;top:1779.96px;font-size:21.9px;line-height:21.9px;color:#fff;font-weight:700;transform:scaleX(0.9451);">General </span>
<span class="t" style="left:857.10px;top:1779.96px;font-size:21.9px;line-height:21.9px;color:#fff;font-weight:700;transform:scaleX(0.9171);">Services </span>
<span class="t" style="left:945.30px;top:1779.96px;font-size:21.9px;line-height:21.9px;color:#fff;font-weight:700;transform:scaleX(0.9732);">Administration</span>
</footer>
</body></html>
